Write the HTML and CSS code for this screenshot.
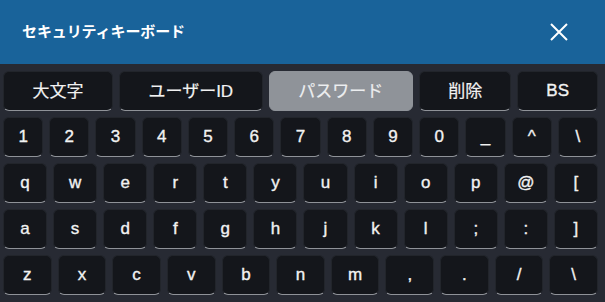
FILE: index.html
```html
<!DOCTYPE html>
<html lang="ja">
<head>
<meta charset="utf-8">
<title>セキュリティキーボード</title>
<link rel="stylesheet" href="styles.css">
</head>
<body>
<div class="panel">
  <header class="header">
    <h1 class="title">セキュリティキーボード</h1>
    <button class="close" aria-label="閉じる">
      <svg width="20" height="20" viewBox="0 0 20 20"><path d="M2 2 L18 18 M18 2 L2 18" stroke="#fff" stroke-width="2" fill="none"/></svg>
    </button>
  </header>
  <div class="keyboard">
    <div class="row">
      <div class="key fn-caps">大文字</div>
      <div class="key fn-user">ユーザーID</div>
      <div class="key fn-pass active">パスワード</div>
      <div class="key fn-del">削除</div>
      <div class="key fn-bs">BS</div>
    </div>
    <div class="row">
      <div class="key">1</div><div class="key">2</div><div class="key">3</div><div class="key">4</div><div class="key">5</div><div class="key">6</div><div class="key">7</div><div class="key">8</div><div class="key">9</div><div class="key">0</div><div class="key">_</div><div class="key">^</div><div class="key">\</div>
    </div>
    <div class="row">
      <div class="key">q</div><div class="key">w</div><div class="key">e</div><div class="key">r</div><div class="key">t</div><div class="key">y</div><div class="key">u</div><div class="key">i</div><div class="key">o</div><div class="key">p</div><div class="key">@</div><div class="key">[</div>
    </div>
    <div class="row">
      <div class="key">a</div><div class="key">s</div><div class="key">d</div><div class="key">f</div><div class="key">g</div><div class="key">h</div><div class="key">j</div><div class="key">k</div><div class="key">l</div><div class="key">;</div><div class="key">:</div><div class="key">]</div>
    </div>
    <div class="row">
      <div class="key">z</div><div class="key">x</div><div class="key">c</div><div class="key">v</div><div class="key">b</div><div class="key">n</div><div class="key">m</div><div class="key">,</div><div class="key">.</div><div class="key">/</div><div class="key">\</div>
    </div>
  </div>
</div>
</body>
</html>
```
FILE: styles.css
```css
* { box-sizing: border-box; }
html, body { margin: 0; padding: 0; }
body {
  width: 605px;
  height: 302px;
  overflow: hidden;
  background: #272a33;
  font-family: "Liberation Sans", "Noto Sans CJK JP", sans-serif;
}
.panel { display: flex; flex-direction: column; height: 302px; }
.header {
  height: 64px;
  background: #19639a;
  display: flex;
  align-items: center;
  justify-content: space-between;
  padding: 0 36px 0 22px;
}
.title {
  margin: 0;
  color: #fff;
  font-family: "Noto Sans CJK JP", sans-serif;
  font-size: 15px;
  font-weight: 700;
  letter-spacing: -0.1px;
  padding-bottom: 4px;
}
.close {
  background: none;
  border: 0;
  padding: 0;
  width: 20px;
  height: 20px;
  display: flex;
}
.keyboard {
  display: flex;
  flex-direction: column;
  gap: 6.6px;
  padding: 7px 7px 6px 3px;
}
.row {
  display: flex;
  gap: 6px;
  height: 39.5px;
}
.key {
  flex: 1 1 0;
  min-width: 0;
  display: flex;
  align-items: center;
  justify-content: center;
  background: #14161b;
  border: 1px solid #22252b;
  border-bottom-color: #8f9298;
  border-radius: 6px;
  color: #f2f2f2;
  font-size: 17px;
  -webkit-text-stroke: 0.35px #f2f2f2;
}
.fn-caps, .fn-user, .fn-pass, .fn-del {
  font-family: "Noto Sans CJK JP", sans-serif;
  font-size: 17px;
  padding-bottom: 2px;
  -webkit-text-stroke: 0.2px #f2f2f2;
}
.fn-user { font-family: "Liberation Sans", "Noto Sans CJK JP", sans-serif; }
.fn-caps { flex-grow: 110; }
.fn-user { flex-grow: 144; }
.fn-pass { flex-grow: 145; }
.fn-del { flex-grow: 92; }
.fn-bs { flex-grow: 80; }
.active {
  background: #8f9399;
  border-color: #8f9399;
  color: #eceef0;
  -webkit-text-stroke: 0.2px #eceef0;
}
```
